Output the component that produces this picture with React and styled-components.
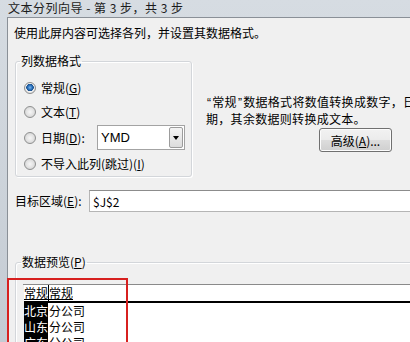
import React from 'react'
import styled, { createGlobalStyle } from 'styled-components'

const GlobalStyle = createGlobalStyle`
  html, body {
    margin: 0;
    padding: 0;
    overflow: hidden;
    background: #f0f0f0;
  }
  body {
    font-family: "Noto Sans CJK SC", "Microsoft YaHei", sans-serif;
    font-size: 12px;
    color: #000;
  }
`

const Window = styled.div`
  position: relative;
  width: 560px;
  height: 342px;
  display: flex;
  flex-direction: column;
  padding-left: 7px;
  background: linear-gradient(#d6dce2, #c4cbd3);
  overflow: hidden;
`

const TitleBar = styled.div`
  height: 22px;
  display: flex;
  align-items: center;
  padding: 0 0 1px 1px;
  box-sizing: border-box;
  line-height: 16px;
  letter-spacing: 0.5px;
  color: #1b1b1b;
`

const Client = styled.div`
  flex: 1;
  display: flex;
  flex-direction: column;
  background: #f0f0f0;
  border-top: 1px solid #8a9097;
  border-left: 1px solid #8a9097;
`

const Intro = styled.div`
  padding: 7px 0 0 6px;
  line-height: 16px;
`

const FormatRow = styled.div`
  display: flex;
  margin-top: 13px;
`

const Group = styled.fieldset`
  box-sizing: border-box;
  min-width: 0;
  margin: ${p => p.$top || 0}px 0 0 7px;
  width: ${p => p.$width}px;
  padding: ${p => p.$pad};
  border: 1px solid #d3d6da;
  border-radius: 3px;
  box-shadow: inset 1px 1px 0 #fff, 1px 1px 0 #fff;
`

const Legend = styled.legend`
  margin-left: ${p => p.$shift}px;
  padding: 0 1px;
  line-height: 14px;
`

const Option = styled.label`
  display: flex;
  align-items: center;
  gap: 5px;
  height: ${p => p.$h || 24}px;
  line-height: 14px;
`

const Radio = styled.span`
  box-sizing: border-box;
  width: 12px;
  height: 12px;
  border-radius: 50%;
  border: 1px solid #8e8f8f;
  background: ${p =>
    p.$checked
      ? 'radial-gradient(circle at 50% 45%, #7fb6e8 0, #2f78c4 2px, #1b4f8a 3.5px, #f4f4f4 4px, #d8d8d8 6px)'
      : 'radial-gradient(circle at 50% 50%, #f6f6f6 0, #e6e6e6 3px, #d2d2d2 6px)'};
  flex: none;
`

const U = styled.span`
  text-decoration: underline;
  text-underline-offset: 1px;
`

const Quote = styled.span`
  font-family: "Liberation Sans", Arial, sans-serif;
  padding: 0 1px;
`

const Combo = styled.div`
  margin-left: auto;
  box-sizing: border-box;
  width: 88px;
  height: 25px;
  display: flex;
  align-items: center;
  background: #fff;
  border: 1px solid #a3a3a3;
  font-family: "Liberation Sans", Arial, sans-serif;
  font-size: 13px;
  padding: 1px 1px 1px 3px;
`

const ComboText = styled.span`
  flex: 1;
`

const ComboButton = styled.span`
  box-sizing: border-box;
  width: 14px;
  height: 21px;
  display: flex;
  align-items: center;
  justify-content: center;
  border: 1px solid #9c9c9c;
  border-radius: 2px;
  background: linear-gradient(#f4f4f4, #dcdcdc);

  &::after {
    content: '';
    border-left: 3.5px solid transparent;
    border-right: 3.5px solid transparent;
    border-top: 4px solid #000;
  }
`

const RightPane = styled.div`
  display: flex;
  flex-direction: column;
  align-items: flex-start;
  margin-left: 14px;
  padding-top: 40px;
`

const Description = styled.div`
  line-height: 15px;
  letter-spacing: 0.3px;
  white-space: nowrap;
`

const Button = styled.button`
  box-sizing: border-box;
  width: 73px;
  height: 24px;
  margin: 2px 0 0 113px;
  padding: 0;
  font: inherit;
  color: #000;
  border: 1px solid #707070;
  border-radius: 3px;
  background: linear-gradient(#f2f2f2 0%, #ebebeb 50%, #dddddd 51%, #cfcfcf 100%);
  box-shadow: inset 0 0 0 1px #fcfcfc;
`

const DestRow = styled.div`
  display: flex;
  align-items: center;
  margin-top: 13px;
  padding-left: 7px;
`

const DestLabel = styled.span`
  width: 74px;
  line-height: 14px;
`

const TextInput = styled.div`
  box-sizing: border-box;
  width: 420px;
  height: 22px;
  display: flex;
  align-items: center;
  padding-left: 3px;
  background: #fff;
  border: 1px solid #b5b5b5;
  border-top-color: #8c8c8c;
`

const PreviewGrid = styled.div`
  border-top: 1px solid #8a8a8a;
  padding-left: 1px;
  line-height: 16px;
`

const HeadRow = styled.div`
  display: flex;
  height: 16px;
  background: #fff;
  border-bottom: 2px solid #000;
`

const HeadCell = styled.span`
  width: ${p => p.$w}px;
  border-right: ${p => (p.$last ? 'none' : '1px solid #000')};
  white-space: nowrap;
  text-decoration: underline;
`

const DataRow = styled.div`
  display: flex;
  height: 16px;
  background: #fff;
`

const Cell = styled.span`
  width: ${p => p.$w}px;
  margin-right: ${p => (p.$last ? 0 : 1)}px;
  white-space: nowrap;
  background: ${p => (p.$selected ? '#000' : 'transparent')};
  color: ${p => (p.$selected ? '#fff' : '#000')};
`

const Highlight = styled.div`
  position: absolute;
  left: 7px;
  top: 278px;
  width: 121px;
  height: 120px;
  border: 2px solid #d7201f;
  box-sizing: border-box;
  pointer-events: none;
`

const rows = ['北京', '山东', '广东']

export default function App() {
  return (
    <>
      <GlobalStyle />
      <Window>
        <TitleBar>文本分列向导 - 第 3 步，共 3 步</TitleBar>
        <Client>
          <Intro>使用此屏内容可选择各列，并设置其数据格式。</Intro>

          <FormatRow>
            <Group $width={177} $pad="8px 6px 0 8px">
              <Legend $shift={-4}>列数据格式</Legend>
              <Option>
                <Radio $checked />
                <span>常规(<U>G</U>)</span>
              </Option>
              <Option>
                <Radio />
                <span>文本(<U>T</U>)</span>
              </Option>
              <Option $h={27}>
                <Radio />
                <span>日期(<U>D</U>):</span>
                <Combo>
                  <ComboText>YMD</ComboText>
                  <ComboButton />
                </Combo>
              </Option>
              <Option $h={25}>
                <Radio />
                <span>不导入此列(跳过)(<U>I</U>)</span>
              </Option>
            </Group>

            <RightPane>
              <Description>
                <Quote>“</Quote>常规<Quote>”</Quote>数据格式将数值转换成数字，日期值转换成日
                <br />
                期，其余数据则转换成文本。
              </Description>
              <Button>高级(<U>A</U>)...</Button>
            </RightPane>
          </FormatRow>

          <DestRow>
            <DestLabel>目标区域(<U>E</U>):</DestLabel>
            <TextInput>$J$2</TextInput>
          </DestRow>

          <Group $top={43} $width={540} $pad="15px 0 0 7px">
            <Legend $shift={-2}>数据预览(<U>P</U>)</Legend>
            <PreviewGrid>
              <HeadRow>
                <HeadCell $w={24}>常规</HeadCell>
                <HeadCell $w={200} $last>常规</HeadCell>
              </HeadRow>
              {rows.map(r => (
                <DataRow key={r}>
                  <Cell $w={24} $selected>{r}</Cell>
                  <Cell $w={200} $last>分公司</Cell>
                </DataRow>
              ))}
            </PreviewGrid>
          </Group>
        </Client>
        <Highlight />
      </Window>
    </>
  )
}
